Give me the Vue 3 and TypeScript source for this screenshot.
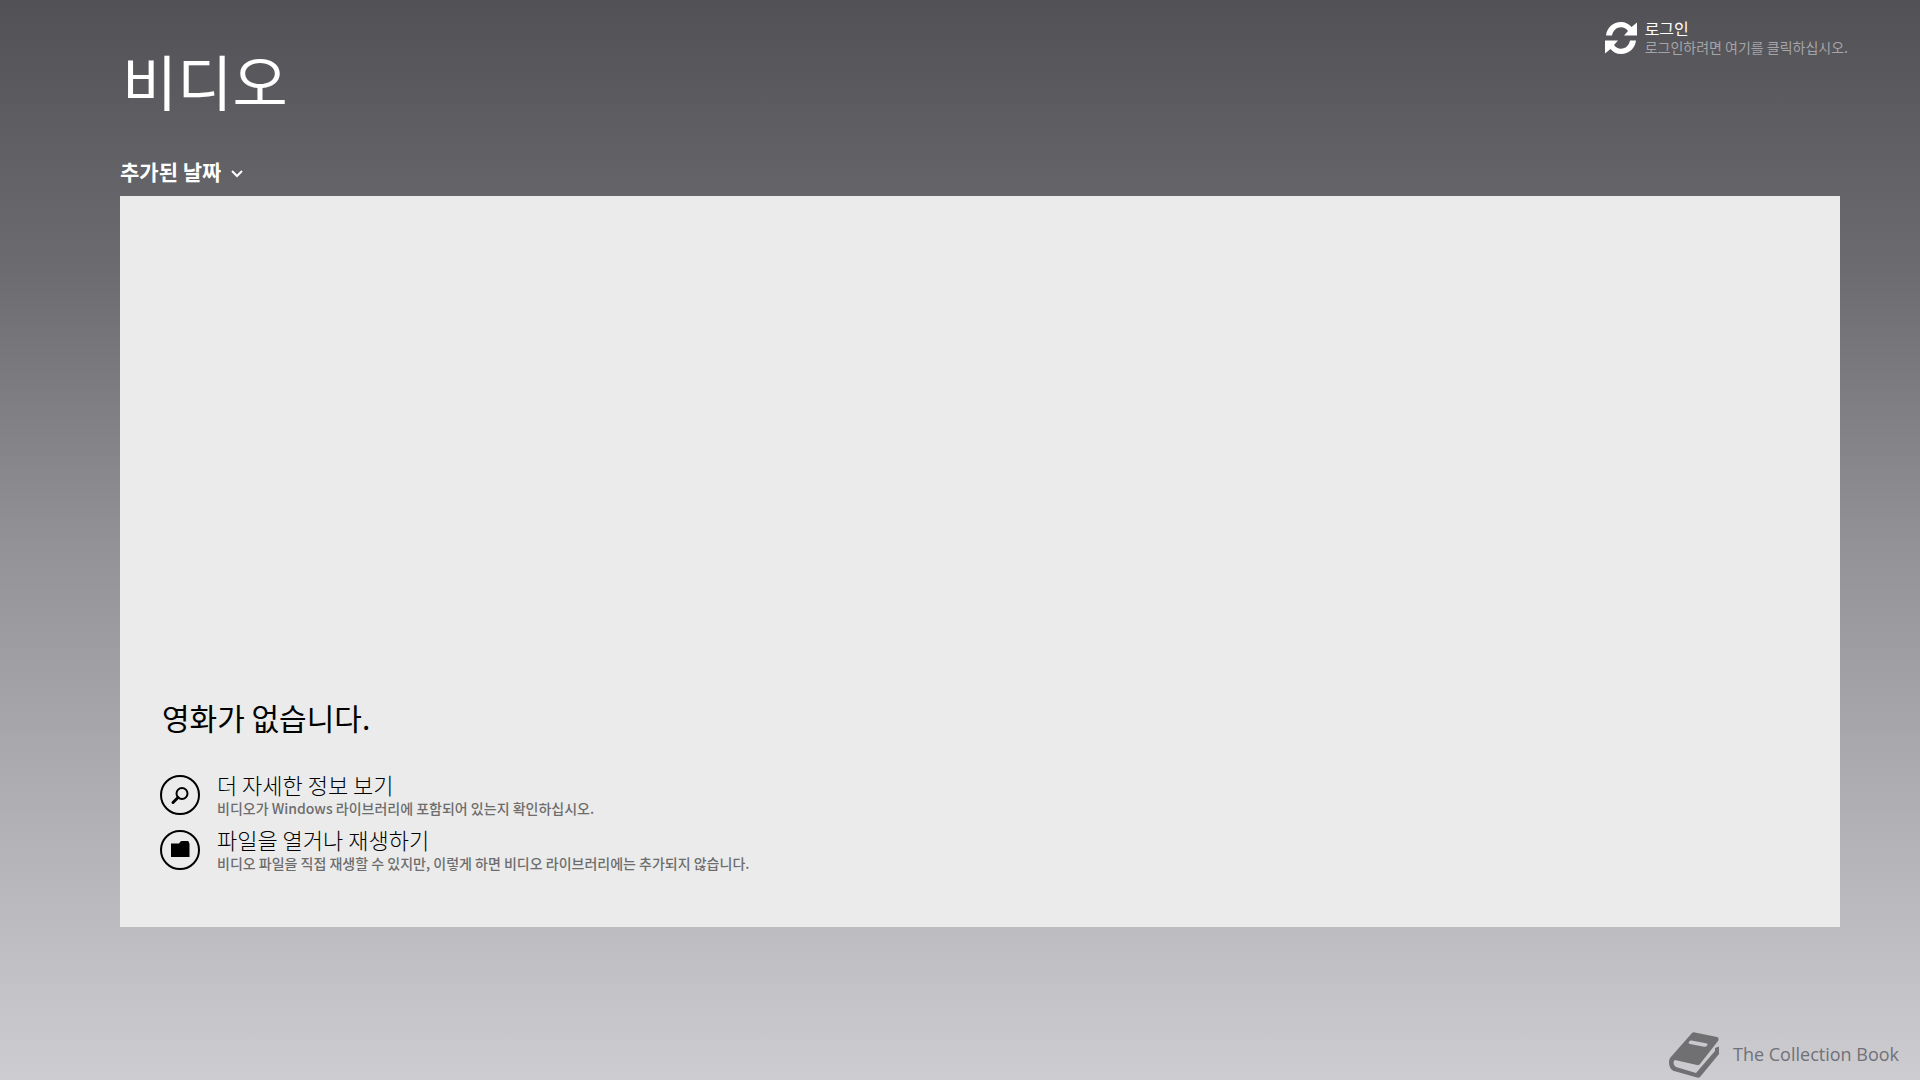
<script setup lang="ts">
import { ref } from 'vue'

interface Action {
  icon: 'search' | 'folder'
  title: string
  detail: string
}

const sortOrder = ref('added')

const sortOptions = [
  { value: 'added', label: '추가된 날짜' },
  { value: 'title', label: '제목' },
]

const actions: Action[] = [
  {
    icon: 'search',
    title: '더 자세한 정보 보기',
    detail: '비디오가 Windows 라이브러리에 포함되어 있는지 확인하십시오.',
  },
  {
    icon: 'folder',
    title: '파일을 열거나 재생하기',
    detail: '비디오 파일을 직접 재생할 수 있지만, 이렇게 하면 비디오 라이브러리에는 추가되지 않습니다.',
  },
]
</script>

<template>
  <div class="page">
    <header class="header">
      <h1 class="title">비디오</h1>
      <button class="account" type="button">
        <svg class="sync" viewBox="0 0 32 32" aria-hidden="true">
          <path d="M1 13.500C2 5.500 8 0 16 0C20.500 0 24 2 26.500 5L32 .500V13.500H19L23 9C21 6.500 19 5.300 16 5.300C11.500 5.300 8 8.500 7 13.500Z" />
          <path d="M31 18.500C30 26.500 24 32 16 32C11.500 32 8 30 5.500 27L0 31.500V18.500H13L9 23C11 25.500 13 26.700 16 26.700C20.500 26.700 24 23.500 25 18.500Z" />
        </svg>
        <span class="account-text">
          <span class="account-name">로그인</span>
          <span class="account-hint">로그인하려면 여기를 클릭하십시오.</span>
        </span>
      </button>
    </header>

    <div class="sort">
      <select v-model="sortOrder" class="sort-select" aria-label="정렬 기준">
        <option v-for="option in sortOptions" :key="option.value" :value="option.value">
          {{ option.label }}
        </option>
      </select>
      <svg class="chevron" viewBox="0 0 12 8" aria-hidden="true">
        <path d="M1 1L6 6L11 1" />
      </svg>
    </div>

    <main class="panel">
      <h2 class="empty">영화가 없습니다.</h2>
      <ul class="actions">
        <li v-for="action in actions" :key="action.icon">
          <button class="action" type="button">
            <svg class="action-icon" viewBox="0 0 40 40" aria-hidden="true">
              <circle class="ring" cx="20" cy="20" r="19" />
              <template v-if="action.icon === 'search'">
                <circle class="lens" cx="22" cy="18.500" r="5.500" />
                <path class="handle" d="M18 22.500L13 27.500" />
              </template>
              <path
                v-else
                class="folder"
                d="M11 13.500H19L20.500 11.500Q21 11 22 11H27.500Q28.500 11 28.800 12L29.500 14V27H11Z"
              />
            </svg>
            <span class="action-text">
              <span class="action-title">{{ action.title }}</span>
              <span class="action-detail">{{ action.detail }}</span>
            </span>
          </button>
        </li>
      </ul>
    </main>

    <footer class="footer">
      <svg class="book" viewBox="0 0 50 46" aria-hidden="true">
        <path
          fill-rule="evenodd"
          d="M23 1Q24 0 26 .500L48 5Q50.500 6 49 9L31 32Q30 33.500 28 33L6 28C4 29 4 33 7 35L27 41L46 19V16L50 14.500V22L31 45Q30 46 28 45.500L5 39C0 37 -1 30 1 26ZM22.500 8.500L37 11.200Q39.500 12 38 13.700Q37 15 35 14.700L21 12Q19 11.500 20 9.800Q21 8.200 22.500 8.500Z"
        />
      </svg>
      <span class="brand">The Collection Book</span>
    </footer>
  </div>
</template>

<style>
body {
  margin: 0;
}
</style>

<style scoped>
.page {
  box-sizing: border-box;
  display: flex;
  flex-direction: column;
  min-height: 100vh;
  padding: 16px 0 0 120px;
  background: linear-gradient(#525156 0%, #6c6b70 25%, #929196 50%, #b0afb4 75%, #cdccd1 100%);
  color: #fff;
  font-family: "Noto Sans CJK KR", sans-serif;
}

button,
select {
  margin: 0;
  padding: 0;
  border: 0;
  background: none;
  color: inherit;
  font-family: inherit;
  text-align: left;
  cursor: pointer;
}

.header {
  display: flex;
  justify-content: space-between;
  align-items: flex-start;
  height: 136px;
  padding-right: 72px;
}

.title {
  margin: 22px 0 0;
  padding-left: 2px;
  font-size: 60px;
  font-weight: 400;
  line-height: 84px;
}

.account {
  display: flex;
  gap: 8px;
  padding-top: 2px;
}

.sync {
  width: 32px;
  height: 32px;
  margin-top: 4px;
  fill: #fff;
}

.account-text,
.action-text {
  display: flex;
  flex-direction: column;
}

.account-name {
  font-size: 16px;
  font-weight: 400;
  line-height: 20px;
}

.account-hint {
  color: #a5a4a8;
  font-size: 14px;
  line-height: 18px;
}

.sort {
  display: flex;
  align-items: center;
  height: 44px;
}

.sort-select {
  field-sizing: content;
  height: 32px;
  margin-bottom: 6px;
  padding-right: 28px;
  appearance: none;
  font-size: 21px;
  font-weight: 700;
  line-height: 32px;
}

.sort-select option {
  color: #000;
}

.chevron {
  width: 12px;
  height: 8px;
  margin-left: -18px;
  fill: none;
  stroke: #fff;
  stroke-width: 2;
  pointer-events: none;
}

.panel {
  box-sizing: border-box;
  display: flex;
  flex: 1;
  flex-direction: column;
  justify-content: flex-end;
  margin-right: 80px;
  padding: 40px 40px 54px;
  background: #ebebeb;
  color: #000;
}

.empty {
  margin: 0 0 31px;
  padding-left: 2px;
  font-size: 30px;
  font-weight: 400;
  line-height: 44px;
}

.actions {
  display: flex;
  flex-direction: column;
  gap: 7px;
  margin: 0;
  padding: 0;
  list-style: none;
}

.action {
  display: flex;
  gap: 17px;
}

.action-icon {
  width: 40px;
  height: 40px;
  margin-top: 5px;
}

.ring,
.lens,
.handle {
  fill: none;
  stroke: #000;
  stroke-width: 2;
}

.handle {
  stroke-width: 3;
  stroke-linecap: round;
}

.folder {
  fill: #000;
}

.action-title {
  font-size: 22px;
  font-weight: 300;
  line-height: 28px;
}

.action-detail {
  color: #6d6d6d;
  font-size: 14px;
  font-weight: 500;
  line-height: 20px;
}

.footer {
  display: flex;
  justify-content: flex-end;
  align-items: flex-start;
  gap: 14px;
  height: 48px;
  padding: 105px 21px 0 0;
  color: #727176;
}

.book {
  width: 50px;
  height: 46px;
  fill: #706f71;
}

.brand {
  padding-top: 10px;
  font-family: "Open Sans", "Noto Sans", sans-serif;
  font-size: 18px;
  line-height: 24px;
}
</style>
